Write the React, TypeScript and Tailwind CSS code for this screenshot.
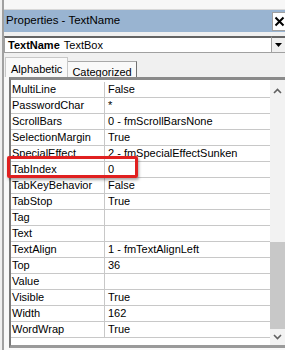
import React from 'react';

interface PropRow {
  name: string;
  value: string;
}

const rows: PropRow[] = [
  { name: 'MultiLine', value: 'False' },
  { name: 'PasswordChar', value: '*' },
  { name: 'ScrollBars', value: '0 - fmScrollBarsNone' },
  { name: 'SelectionMargin', value: 'True' },
  { name: 'SpecialEffect', value: '2 - fmSpecialEffectSunken' },
  { name: 'TabIndex', value: '0' },
  { name: 'TabKeyBehavior', value: 'False' },
  { name: 'TabStop', value: 'True' },
  { name: 'Tag', value: '' },
  { name: 'Text', value: '' },
  { name: 'TextAlign', value: '1 - fmTextAlignLeft' },
  { name: 'Top', value: '36' },
  { name: 'Value', value: '' },
  { name: 'Visible', value: 'True' },
  { name: 'Width', value: '162' },
  { name: 'WordWrap', value: 'True' },
];

const App: React.FC = () => {
  return (
    <div
      className="relative w-[285px] h-[350px] overflow-hidden bg-[#f0f0f0] text-black"
      style={{ fontFamily: '"Liberation Sans", Arial, sans-serif' }}
    >
      <div className="flex h-full pl-[2px]">
        {/* outer window edge */}
        <div className="w-[2px] h-full bg-[#a0a0a0]" />

        <div className="flex-1 flex flex-col">
          {/* top strip */}
          <div className="h-[10px] bg-[#f7f7f7] border-b border-[#d8d8d8]" />

          {/* Title bar */}
          <div className="h-[22px] flex items-center bg-[#99b4d1] pl-[2px]">
            <span className="flex-1 text-[11.5px] leading-none">Properties - TextName</span>
            <div className="w-[13px] h-[19px] bg-white border border-[#a0a0a0] border-r-0 flex items-center justify-center">
              <svg width="11" height="11" viewBox="0 0 11 11">
                <path d="M1.5 1.5 L9.5 9.5 M9.5 1.5 L1.5 9.5" stroke="#000" strokeWidth="2" />
              </svg>
            </div>
          </div>

          {/* Object combo */}
          <div className="mt-[4px] h-[17px] flex">
            <div className="flex-1 flex items-center bg-white border border-[#a0a0a0] border-t-[2px] border-t-[#646464] px-[3px] text-[11px]">
              <span className="font-bold">TextName</span>
              <span className="ml-[4px]">TextBox</span>
            </div>
            <div className="w-[13px] flex items-center justify-center bg-[#f0f0f0] border-t-[2px] border-t-[#646464] border-b border-b-[#a0a0a0]">
              <svg width="7" height="4" viewBox="0 0 7 4">
                <path d="M0 0 L7 0 L3.5 4 Z" fill="#000" />
              </svg>
            </div>
          </div>

          {/* Tabs */}
          <div className="mt-[4px] flex items-end h-[20px] pl-[1px]">
            <div className="h-[20px] px-[5px] pt-[3px] bg-[#f9f9f9] border border-b-0 border-[#c8c8c8] text-[11px]">
              Alphabetic
            </div>
            <div className="h-[16px] px-[4px] pt-[2px] bg-[#f9f9f9] border border-l-0 border-b-0 border-[#a8a8a8] border-r-[#707070] text-[11px]">
              Categorized
            </div>
          </div>

          {/* Grid */}
          <div className="flex-1 flex pl-[5px] bg-[#f9f9f9] pb-[2px]">
            <div className="flex-1 flex border-t-[3px] border-t-[#8a8a8a] border-l-[2px] border-l-[#7a7a7a] border-b-[3px] border-b-[#9a9a9a]">
              <div className="flex-1 bg-white pt-[2px] flex flex-col">
                {rows.map((r) => (
                  <div key={r.name} className="h-[16px] flex border-b border-[#c8c8c8] text-[11px] leading-[15px]">
                    <div className="w-[94px] pl-[1px] border-r border-[#c8c8c8] whitespace-nowrap overflow-hidden">
                      {r.name}
                    </div>
                    <div className="flex-1 pl-[3px] whitespace-nowrap overflow-hidden">{r.value}</div>
                  </div>
                ))}
              </div>
              {/* scrollbar */}
              <div className="w-[15px] bg-[#f2f2f2] flex flex-col items-center">
                <div className="h-[16px] flex items-center justify-center mt-[3px]">
                  <svg width="9" height="6" viewBox="0 0 9 6">
                    <path d="M1 5 L4.5 1.5 L8 5" stroke="#606060" strokeWidth="1.6" fill="none" />
                  </svg>
                </div>
                <div className="flex-1" />
                <div className="w-full h-[87px] bg-[#c8c8c8]" />
                <div className="h-[16px] flex items-center justify-center">
                  <svg width="9" height="6" viewBox="0 0 9 6">
                    <path d="M1 1 L4.5 4.5 L8 1" stroke="#606060" strokeWidth="1.6" fill="none" />
                  </svg>
                </div>
              </div>
            </div>
          </div>
        </div>
      </div>

      {/* red highlight annotation */}
      <div className="absolute left-[7px] top-[156px] w-[131px] h-[22px] border-[3px] border-[#e02020] rounded-[2px] shadow-[1px_2px_3px_rgba(0,0,0,0.35)]" />
    </div>
  );
};

export default App;
